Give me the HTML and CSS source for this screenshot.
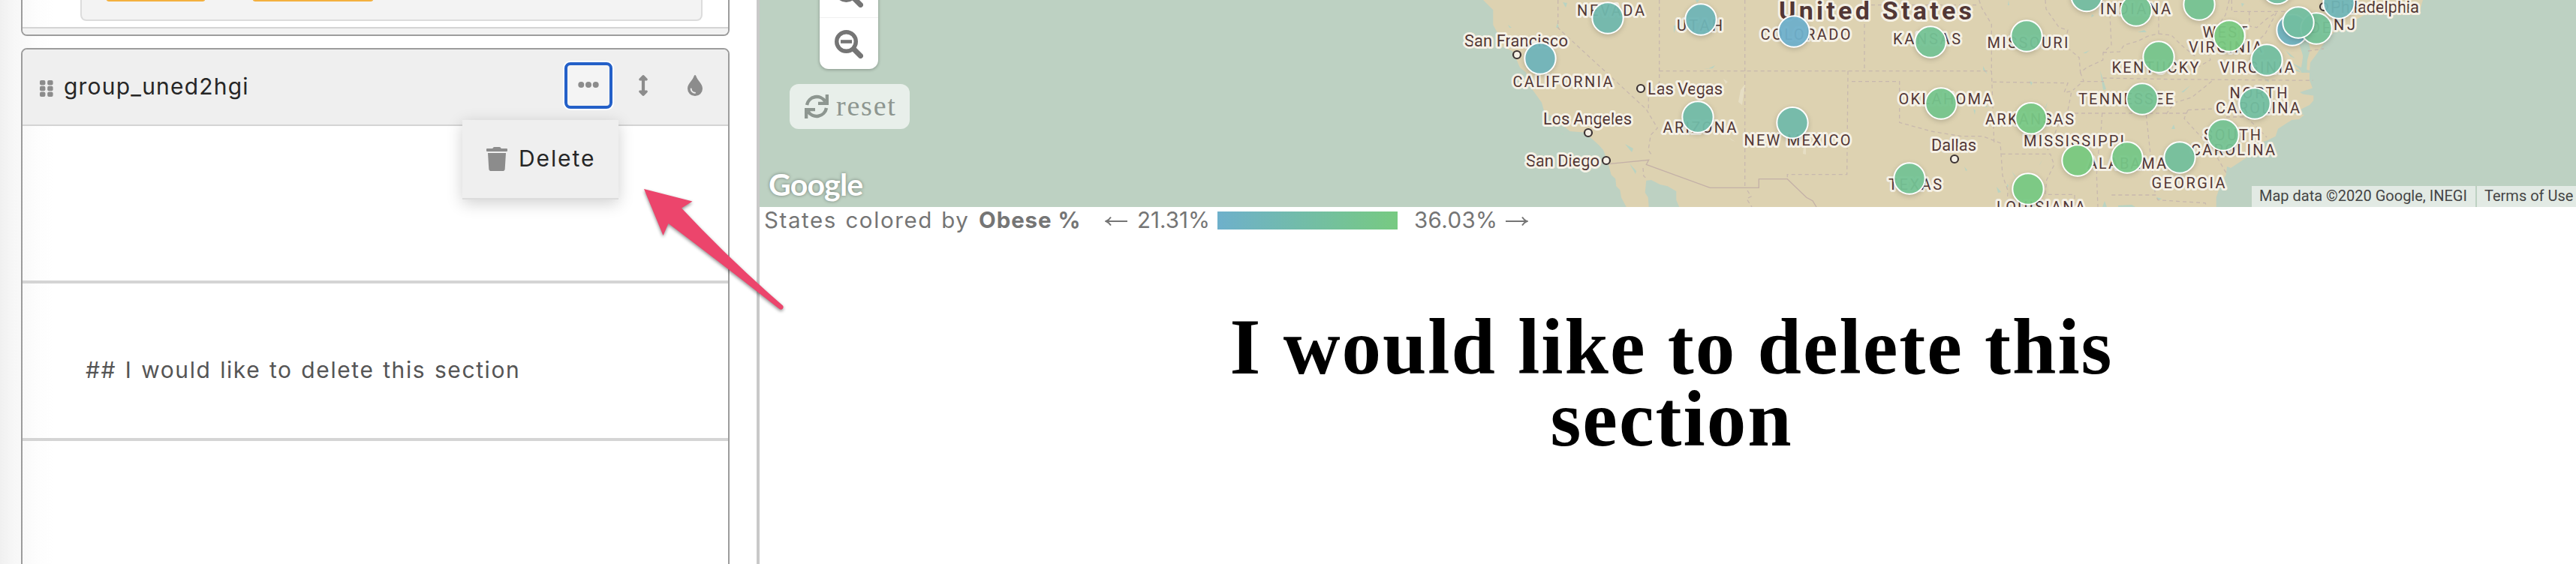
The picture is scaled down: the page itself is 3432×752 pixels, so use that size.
FILE: index.html
```html
<!DOCTYPE html>
<html lang="en">
<head>
<meta charset="utf-8">
<title>Page editor</title>
<link rel="stylesheet" href="styles.css">
</head>
<body>
<div class="app">
  <aside class="sidebar">
    <section class="group group-prev">
      <div class="prev-body">
        <div class="chip-box"><span class="chip chip-a"></span><span class="chip chip-b"></span></div>
      </div>
      <div class="prev-foot"></div>
    </section>
    <section class="group group-current">
      <header class="group-head">
        <svg class="grip" viewBox="0 0 18 22"><g fill="#8c8c8c"><rect x="0" y="0" width="7.4" height="6.6" rx="2"/><rect x="10.2" y="0" width="7.4" height="6.6" rx="2"/><rect x="0" y="7.7" width="7.4" height="6.6" rx="2"/><rect x="10.2" y="7.7" width="7.4" height="6.6" rx="2"/><rect x="0" y="15.4" width="7.4" height="6.6" rx="2"/><rect x="10.2" y="15.4" width="7.4" height="6.6" rx="2"/></g></svg>
        <span class="group-name">group_uned2hgi</span>
        <div class="tools">
          <button class="tool tool-more" aria-label="More"><svg width="28" height="8" viewBox="0 0 28 8"><g fill="#8c8c8c"><circle cx="4.3" cy="4" r="4"/><circle cx="14" cy="4" r="4"/><circle cx="23.7" cy="4" r="4"/></g></svg></button>
          <svg class="tool-arrows" viewBox="0 0 12 28"><path fill="#8c8c8c" d="M6 0 Q6.7 0 7.4.7L11.5 4.9Q12.4 6.7 10.8 7.4H8.1V20.6H10.8Q12.4 21.3 11.5 23.1L7.4 27.3Q6 28.5 4.6 27.3L.5 23.1Q-.4 21.3 1.2 20.6H3.9V7.4H1.2Q-.4 6.7.5 4.9L4.6.7Q5.3 0 6 0Z"/></svg>
          <svg class="tool-drop" viewBox="0 0 20 28"><path fill="#8c8c8c" d="M8.8 1Q10-.8 11.2 1C13.1 7.5 20 11.2 20 18.2A10 9.8 0 0 1 0 18.2C0 11.2 6.9 7.5 8.8 1Z"/><path fill="none" stroke="#efefef" stroke-width="1.9" stroke-linecap="round" d="M4.7 18.4A5.3 5.2 0 0 0 10 23.7"/></svg>
        </div>
        <div class="menu">
          <svg class="trash" viewBox="0 0 28 32"><path fill="#8c8c8c" d="M1 2H8.2L9.3.6Q9.8 0 10.6 0H17.4Q18.2 0 18.7.6L19.8 2H27Q28 2 28 3V5Q28 6 27 6H1Q0 6 0 5V3Q0 2 1 2ZM2 8H26L24.7 29.2Q24.5 32 21.7 32H6.3Q3.5 32 3.3 29.2Z"/></svg>
          <span class="menu-text">Delete</span>
        </div>
      </header>
      <div class="cell cell-blank"></div>
      <div class="cell cell-text"><span>## I would like to delete this section</span></div>
      <div class="cell cell-last"></div>
    </section>
  </aside>
  <main class="preview">
    <div class="map">
      <svg class="map-canvas" viewBox="1012 0 2420 276" width="2420" height="276">
        <path class="land" d="M1976 0L1989.3 13.3V33.3L1996.7 46.7 2000 61.7 2015 68.3 2020.7 80 2025 90 2033.3 96.7 2034 110 2043.3 121.7 2054 136.7 2056.7 146.7 2073.3 160 2091.7 175 2111.7 176.7 2130 193.3 2136 200 2141.7 215 2146.7 233.3 2152.3 238.3 2153.3 248.3 2158.3 253.3 2160 263.3 2166.7 276H2196.7L2195.7 263.3 2191.7 256.7 2193.3 240.7 2200 240 2211.7 246 2221.7 248.3 2233.3 255V266.7L2237.3 276H2952.7V263.3L2958.3 246.7 2965.7 233.3 2967 222 2972 224 2993.3 210 3008 191 3020 187.5 3031.7 181.7 3035 171.7 3053.3 160 3063 159 3070 153 3054 151.7 3073.3 141.7 3077 140 3082.3 134 V127.5L3068 125.5 3064 123 3081 117.5 3077 106.7V97H3067L3062 91 3050 82 3066 90 3069 70 3062 62 3071 71V92L3077 94 3078 83.3 3086.7 71.7 3096.7 56.7 3108 44 3122 40 3136 28 3150 20H3222L3228 0Z"/>
        <g class="water">
          <path d="M2165 192L2176 198 2174 203Z M2171 218L2180 228 2179 232Z M2082 3L2088 4 2086 10Z M2009 33L2014 37 2011 37Z M2230 34L2234 34 2230 44Z M2275 92L2285 87 2282 91 2270 92Z M2259 0H2264L2261 4Z M2078 177L2084 178 2082 180Z M2075 31L2077 37 2073 37Z"/>
          <path d="M2642 88L2648 99 2642 93Z M2629 145L2632 147 2631 153Z M2646 139L2648 143 2645 143Z M2617 222L2621 227 2619 228Z M2660 249L2666 256 2662 257Z M2674 245L2676 248 2674 250Z M2680 228L2686 236 2684 235Z M2717 220L2721 213 2718 219Z M2704 108L2708 110 2706 114Z M2775 71L2784 67 2779 71Z M2798 94L2806 119 2802 120Z M2724 145L2728 136 2726 143Z M2787 19L2790 21 2786 23Z M2804 268L2807 276H2801Z M2822 274L2840 273 2845 276H2822Z M2676 0L2677 7 2675 7Z"/>
          <path d="M2848 43L2857 40 2860 43Z M2893 172L2896 166 2898 172Z M2906 123L2918 114 2909 123Z M2962 101L2968 94 2966 98Z M2986 4L2990 5 2987 9Z M2873 263L2880 265 2876 267Z M3016 104L3022 107 3023 110Z M3062 54L3075 54 3078 66 3074 80 3073 96 3066 97 3069 77Z M3045 67L3058 78 3051 75Z M3050 91L3062 93 3066 97Z"/>
        </g>
        <path class="sand" d="M2296 105L2302 109 2299 112Z M2319 120L2325 112 2321 140 2316 136Z M2303 183L2312 189 2307 187Z M2403 196L2406 195V206L2402 205Z"/>
        <g class="borders">
          <path class="country" d="M2145 218.3L2196.7 213.3 2193.3 219.3 2278.3 250.3H2343.3V238.7H2381.3L2406.7 263.3 2415 267.7 2420 276"/>
          <path d="M2075.7 0V37.3L2193.3 145.7 2201.7 160 2208.3 170.7 2199.3 180 2196 200 2201.7 208.3M2210.7 0V110L2196.3 130V146M2210.7 94.7H2653.3M2324.7 0V250M2484 32V94.7M2462 94.7L2460.7 232.7H2381.3V238M2467 108.7H2530.7V163.3L2573 175 2613 181.7H2641.7L2665 190.7 2668 234 2675 254 2674 276M2636.7 0L2640 10 2653.3 32.3V94.7L2656.7 190M2493 6.7H2637M2328 254L2333 262 2327 265 2334 276M2189 224L2190 235 2194 238"/>
          <path d="M2655 109.3L2755 110.7 2750 123.3 2760 121.7 2755 146.7 2743.3 163.3 2737 180 2728 200M2666.7 205.3H2731.7L2736.7 220 2726.7 240 2725 259.3H2764V276M2725 0L2726 12 2743.3 36.7 2755 40 2750 60 2770 76.7 2771.7 96.7 2780 90 2801.7 80 2802 70 2813 60 2811 20V0M2771.7 108.7H2803M2771.7 96.7L2776 108 2762 120M2801.7 104L2880 105.5 3081.7 107.3M2755 151H2916M2800.7 151L2799.3 173M2796 200L2793.3 233 2795 276M2813.3 260H2871.7L2875 266.7 2938 270.7 2940 276M2802 70L2824 69 2830 60 2848 55 2862 48 2876 45V0M2876 45L2893 47 2906 60 2927 77M2927 90L2945 80 2940 65M2859.3 153L2868 233 2871.7 260M2915 146.7L2948 145M2915 146.7L2910 158 2948.3 200 2966.7 232M2966 156H2993L3020 183M2973.3 0V15.3H3050M2996.7 15.3V35L3006.7 36.7 3020 25 3033 16.7M3033 16.7L3018 45 3003 60M2886 152L2897 137 2920 130 2947 108M2970 0L2965 20 2953 37M3075 68L3096 65"/>
        </g>
        <g class="cities"><circle cx="2021" cy="73" r="5"/><circle cx="2186" cy="118" r="5"/><circle cx="2116" cy="177" r="5"/><circle cx="2140" cy="214" r="5"/><circle cx="2604" cy="212" r="5"/><circle cx="3096" cy="9" r="5"/></g>
        <g class="label city">
          <text x="1951" y="62" textLength="138">San Francisco</text>
          <text x="2195" y="125.7" textLength="100">Las Vegas</text>
          <text x="2056" y="165.7" textLength="118">Los Angeles</text>
          <text x="2033" y="221.7" textLength="98">San Diego</text>
          <text x="2573" y="200.7" textLength="60">Dallas</text>
          <text x="3105" y="16.7" textLength="118">Philadelphia</text>
        </g>
        <g class="label country-name"><text x="2370" y="25.700" textLength="257">United States</text></g>
        <g class="label state">
          <text x="2101" y="21" textLength="90">NEVADA</text>
          <text x="2234" y="40.700" textLength="61">UTAH</text>
          <text x="2015.500" y="116" textLength="133">CALIFORNIA</text>
          <text x="2215.500" y="177" textLength="98">ARIZONA</text>
          <text x="2345.500" y="52.700" textLength="120">COLORADO</text>
          <text x="2522" y="59.300" textLength="90">KANSAS</text>
          <text x="2647.500" y="64" textLength="108">MISSOURI</text>
          <text x="2529.500" y="138.700" textLength="125">OKLAHOMA</text>
          <text x="2645" y="166" textLength="118">ARKANSAS</text>
          <text x="2323.500" y="194" textLength="142">NEW MEXICO</text>
          <text x="2516" y="253.300" textLength="71">TEXAS</text>
          <text x="2660" y="283" textLength="118">LOUISIANA</text>
          <text x="2696" y="195" textLength="134">MISSISSIPPI</text>
          <text x="2781" y="225" textLength="105">ALABAMA</text>
          <text x="2798" y="19" textLength="94">INDIANA</text>
          <text x="2813.500" y="97" textLength="116">KENTUCKY</text>
          <text x="2769" y="138.700" textLength="127">TENNESSEE</text>
          <text x="2934.500" y="50" textLength="60">WEST</text>
          <text x="2916" y="70" textLength="98">VIRGINIA</text>
          <text x="2957.500" y="97" textLength="99">VIRGINIA</text>
          <text x="2970.500" y="130.700" textLength="77">NORTH</text>
          <text x="2952" y="151" textLength="112">CAROLINA</text>
          <text x="2936" y="187" textLength="76">SOUTH</text>
          <text x="2919" y="207" textLength="112">CAROLINA</text>
          <text x="2866.500" y="251" textLength="98">GEORGIA</text>
          <text x="3109" y="40" textLength="29">NJ</text>
          <text x="3078" y="44" textLength="27">DE</text>
        </g>
        <g class="pins">
          <circle cx="2142" cy="24" r="20.700" fill="#71b9ae"/><circle cx="2266" cy="26" r="20.700" fill="#70b6b8"/>
          <circle cx="2052" cy="78" r="20.700" fill="#70b5bb"/><circle cx="2262" cy="156" r="20.700" fill="#72bca9"/>
          <circle cx="2390" cy="42" r="20.700" fill="#6eb0cc"/><circle cx="2572" cy="56" r="20.700" fill="#75c396"/>
          <circle cx="2388" cy="163.700" r="20.700" fill="#72bbab"/><circle cx="2586" cy="138" r="20.700" fill="#76c68d"/>
          <circle cx="2544" cy="238" r="20.700" fill="#75c396"/><circle cx="2700" cy="48" r="20.700" fill="#75c297"/>
          <circle cx="2706" cy="157.700" r="20.700" fill="#78c986"/><circle cx="2702" cy="252" r="20.700" fill="#78ca84"/>
          <circle cx="2768" cy="214" r="20.700" fill="#79ca81"/><circle cx="2834" cy="210" r="20.700" fill="#77c888"/>
          <circle cx="2780" cy="-5.500" r="20.700" fill="#73bda3"/><circle cx="2846" cy="14" r="20.700" fill="#75c494"/>
          <circle cx="2930" cy="6" r="20.700" fill="#75c494"/><circle cx="2970" cy="48" r="20.700" fill="#79ca82"/>
          <circle cx="2876" cy="76" r="20.700" fill="#76c68d"/><circle cx="3020" cy="80" r="20.700" fill="#73bfa2"/>
          <circle cx="2854" cy="132" r="20.700" fill="#75c494"/><circle cx="3004" cy="138" r="20.700" fill="#73bfa2"/>
          <circle cx="2962" cy="180" r="20.700" fill="#75c494"/><circle cx="2904" cy="210" r="20.700" fill="#74c09d"/>
          <circle cx="3034" cy="-15.500" r="20.700" fill="#73bfa2"/><circle cx="3054" cy="40" r="20.700" fill="#6fb3c0"/>
          <circle cx="3086" cy="38" r="20.700" fill="#75c298"/><circle cx="3062" cy="30" r="20.700" fill="#73bfa1"/>
          <circle cx="3116" cy="4" r="20.700" fill="#70b6b8"/>
        </g>
      </svg>
      <div class="zoom">
        <div class="zoom-btn zoom-in"><svg viewBox="0 0 38 38"><circle cx="15.500" cy="15.500" r="12.800" fill="none" stroke="#757575" stroke-width="5.400"/><path d="M25.500 25.500L34.500 34.500" stroke="#757575" stroke-width="7" stroke-linecap="round"/><path d="M8 15.500H23M15.500 8V23" stroke="#757575" stroke-width="4.600"/></svg></div>
        <div class="zoom-btn zoom-out"><svg viewBox="0 0 38 38"><circle cx="15.500" cy="15.500" r="12.800" fill="none" stroke="#757575" stroke-width="5.400"/><path d="M25.500 25.500L34.500 34.500" stroke="#757575" stroke-width="7" stroke-linecap="round"/><path d="M8 15.500H23" stroke="#757575" stroke-width="4.600"/></svg></div>
      </div>
      <button class="reset"><svg viewBox="0 0 32 32"><g fill="none" stroke="#8d9690" stroke-width="4.400"><path d="M3 14A13.300 13.300 0 0 1 27.500 9.500M18 11.900H29.900V0"/><path d="M29 18A13.300 13.300 0 0 1 4.500 22.500M14 20.100H2.100V32"/></g></svg><span>reset</span></button>
      <span class="google">Google</span>
      <div class="credits"><span class="credit credit-data">Map data ©2020 Google, INEGI</span><span class="credit credit-terms">Terms of Use</span></div>
    </div>
    <div class="legend">
      <span class="lg-title">States colored by</span><b class="lg-var">Obese %</b>
      <svg class="lg-arrow lg-left" viewBox="0 0 30 14"><path d="M30 7H2M8 1.500Q5.500 5.500 1.500 7Q5.500 8.500 8 12.500" fill="none" stroke="#757575" stroke-width="2"/></svg>
      <span class="lg-min">21.31%</span><span class="lg-bar"></span><span class="lg-max">36.03%</span>
      <svg class="lg-arrow lg-right" viewBox="0 0 30 14"><path d="M0 7H28M22 1.500Q24.500 5.500 28.500 7Q24.500 8.500 22 12.500" fill="none" stroke="#757575" stroke-width="2"/></svg>
    </div>
    <h2 class="title">I would like to delete this<br>section</h2>
  </main>
  <svg class="pointer" viewBox="840 240 220 190"><path d="M858 252L922.500 268.500 908 277.500Q970 344 1043 407.500Q1044.500 410 1042.500 412Q1040.500 413.500 1038.500 412Q962 352 890.500 298L883.500 314Z"/></svg>
</div>
</body>
</html>
```
FILE: styles.css
```css
* { box-sizing: border-box; }
body { margin: 0; background: #fff; font-family: Inter, "Liberation Sans", sans-serif; }
.app { position: relative; display: flex; width: 3432px; height: 752px; overflow: hidden; }

.sidebar { flex: none; width: 1012px; padding: 0 36px 0 28px; border-right: 4px solid #c9c9c9; background: linear-gradient(to right, #f0f0f0 0, #f7f7f7 18px, #fdfdfd 50px, #fff 72px); }
.group { border: 2px solid #9c9c9c; }
.group-prev { height: 48px; border-top: 0; border-radius: 0 0 8px 8px; overflow: hidden; }
.prev-body { height: 38px; padding: 0 34px 0 77px; border-bottom: 2px solid #d4d4d4; }
.chip-box { display: flex; height: 28px; padding-left: 33px; gap: 64px; background: #f3f3f3; border: 2px solid #dcdcdc; border-top: 0; border-radius: 0 0 8px 8px; }
.chip { height: 2px; background: #f3b03e; border-radius: 0 0 5px 5px / 0 0 2px 2px; }
.chip-a { width: 131px; }
.chip-b { width: 160px; }
.prev-foot { height: 8px; background: #f2f2f2; }
.group-current { height: 720px; margin-top: 16px; border-radius: 8px; }
.group-head { position: relative; display: flex; align-items: center; height: 102px; padding: 0 34px 0 23px; background: #efefef; border-bottom: 2px solid #d4d4d4; border-radius: 6px 6px 0 0; }
.grip { width: 18px; height: 22px; margin-top: 4px; }
.group-name { margin-left: 14px; margin-top: -2px; font-size: 30px; line-height: 40px; letter-spacing: 1.2px; color: #262626; }
.tools { display: flex; align-items: center; margin-left: auto; padding-bottom: 5px; }
.tool { display: flex; align-items: center; justify-content: center; width: 64px; height: 62px; padding: 0 0 2px; border: 4px solid #2460c8; border-radius: 8px; background: #f4f4f4; box-shadow: 0 0 0 2px #fff; }
.tool-arrows { width: 12px; height: 28px; margin-left: 35px; }
.tool-drop { width: 20px; height: 28px; margin-left: 53px; }
.menu { position: absolute; left: 586px; top: 94px; display: flex; align-items: center; width: 208px; height: 106px; padding: 0 0 0 32px; background: #efefef; border-bottom: 2px solid #dcdcdc; box-shadow: 0 5px 20px rgba(0,0,0,.19); }
.trash { width: 28px; height: 32px; }
.menu-text { margin-left: 15px; margin-top: -2px; font-size: 30px; letter-spacing: 1.9px; color: #262626; }
.cell { border-bottom: 4px solid #d4d4d4; }
.cell-blank { height: 210px; }
.cell-text { display: flex; align-items: center; height: 210px; padding: 23px 0 0 84px; font-size: 30px; letter-spacing: 1.6px; word-spacing: 1.6px; color: #555; }
.cell-last { border: 0; }

.preview { flex: none; width: 2420px; }
.map { position: relative; height: 276px; overflow: hidden; background: #bdd1c2; }
.map-canvas { display: block; }
.land { fill: #ddd2b1; }
.water { fill: #b9d3c2; }
.sand { fill: #e6dec4; }
.borders path { fill: none; stroke: #c7b8ae; stroke-width: 1.3; stroke-dasharray: 5 4; }
.borders .country { stroke: #c3b0a7; stroke-dasharray: none; }
.cities circle { fill: #f5f1e6; stroke: #3d3434; stroke-width: 2.2; }
.label { font-family: Roboto, sans-serif; fill: #523735; stroke: #f5f1e6; stroke-width: 6px; stroke-linejoin: round; paint-order: stroke; }
.city { font-size: 22px; }
.state { font-size: 20px; }
.country-name { font-size: 34px; font-weight: 700; }
.pins circle { stroke: #fff; stroke-width: 2; fill-opacity: .94; filter: drop-shadow(0 2px 3px rgba(0,0,0,.18)); }
.zoom { position: absolute; left: 80px; top: -44px; width: 78px; height: 136px; background: #fff; border-radius: 12px; box-shadow: 0 1px 4px rgba(0,0,0,.3); }
.zoom-btn { height: 68px; padding: 16px 0 0 20px; }
.zoom-in { border-bottom: 1px solid #f0f0f0; }
.zoom-btn svg { display: block; width: 38px; height: 38px; }
.reset { position: absolute; left: 40px; top: 112px; display: flex; align-items: center; width: 160px; height: 60px; padding: 0 0 0 20px; border: 0; border-radius: 12px; background: #e8efea; font-family: "Liberation Serif", serif; font-size: 38px; letter-spacing: 1.8px; color: #8d9690; }
.reset svg { width: 32px; height: 32px; }
.reset span { margin-left: 10px; margin-top: -2px; }
.google { position: absolute; left: 12px; top: 221px; font: 700 41px/50px Lato, sans-serif; letter-spacing: -.8px; color: #fff; text-shadow: 0 0 4px rgba(0,0,0,.4); }
.credits { position: absolute; right: 0; bottom: 0; display: flex; gap: 2px; width: 432px; height: 28px; font: 20px/27px Roboto, sans-serif; color: #454545; white-space: nowrap; }
.credit { background: #e2eae4; padding-left: 10px; }
.credit-data { width: 298px; }
.credit-terms { width: 132px; }

.legend { display: flex; align-items: center; height: 36px; padding-left: 6px; font-size: 29.500px; line-height: 34px; color: #757575; white-space: nowrap; }
.legend span, .legend b { position: static; margin-top: -2px; }
.lg-title { width: 286px; letter-spacing: 1.6px; word-spacing: 1.5px; }
.lg-var { width: 168px; font-weight: 700; letter-spacing: .9px; }
.lg-arrow { flex: none; width: 30px; height: 14px; margin-top: 2px; }
.legend .lg-min { width: 107px; margin-left: 13px; }
.legend .lg-bar { width: 240px; height: 24px; margin-top: 0; background: linear-gradient(to right, #6eb0cb, #77ca81); }
.legend .lg-max { width: 122px; margin-left: 22px; letter-spacing: .4px; }
.title { margin: 103px 0 0; padding-left: 10px; font: 700 105px/96px "Liberation Serif", serif; letter-spacing: 2px; text-align: center; color: #000; }
.pointer { position: absolute; left: 840px; top: 240px; width: 220px; height: 190px; fill: #ec456c; filter: drop-shadow(0 2px 2px rgba(0,0,0,.45)); }
```
